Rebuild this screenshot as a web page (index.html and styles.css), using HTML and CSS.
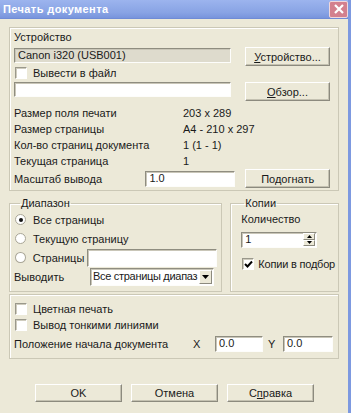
FILE: index.html
```html
<!DOCTYPE html>
<html>
  <head>
    <meta charset=utf-8>
    <title>Печать документа</title>
    <link rel="stylesheet" href="styles.css">
  </head>
  <body>
    <div class="window">
      <div class="titlebar">
        <span class="title">Печать документа</span>
        <span class="close">
          <svg width="12" height="12" viewBox="0 0 12 12"><path d="M2 2L10 10M10 2L2 10" stroke="#fff" stroke-width="2.2"/></svg>
        </span>
      </div>
      <div class="body">
        <div class="group device">
          <div class="dev-label">Устройство</div>
          <div class="row r-dev">
            <div class="field grey">Canon i320 (USB001)</div>
            <button class="btn"><u>У</u>стройство...</button>
          </div>
          <div class="check-row"><span class="check"></span>Вывести в файл</div>
          <div class="row r-file">
            <div class="field"></div>
            <button class="btn"><u>О</u>бзор...</button>
          </div>
          <div class="info">
            <span>Размер поля печати</span><span>203 x 289</span>
          </div>
          <div class="info">
            <span>Размер страницы</span><span>A4 - 210 x 297</span>
          </div>
          <div class="info">
            <span>Кол-во страниц документа</span><span>1 (1 - 1)</span>
          </div>
          <div class="info">
            <span>Текущая страница</span><span>1</span>
          </div>
          <div class="row r-scale">
            <span class="scale-label">Масштаб вывода</span>
            <div class="field scale">1.0</div>
            <button class="btn">Подогнать</button>
          </div>
        </div>

        <div class="middle">
          <fieldset class="range">
            <legend>Диапазон</legend>
            <div class="radio-row"><span class="radio on"></span>Все страницы</div>
            <div class="radio-row"><span class="radio"></span>Текущую страницу</div>
            <div class="radio-row">
              <span class="radio"></span><span class="pages-label">Страницы</span>
              <div class="field pages"></div>
            </div>
            <div class="out-row">
              <span class="out-label">Выводить</span>
              <div class="field select">
                <span class="select-text">Все страницы диапаз</span>
                <span class="drop">
                  <svg width="7" height="4" viewBox="0 0 7 4"><path d="M0 0H7L3.5 4Z" fill="#000"/></svg>
                </span>
              </div>
            </div>
          </fieldset>
          <fieldset class="copies">
            <legend>Копии</legend>
            <div class="count-label">Количество</div>
            <div class="field spin">
              <span>1</span>
              <span class="spin-btns">
                <span class="spin-btn"><svg width="5" height="3" viewBox="0 0 5 3"><path d="M0 3H5L2.5 0Z" fill="#000"/></svg></span>
                <span class="spin-btn"><svg width="5" height="3" viewBox="0 0 5 3"><path d="M0 0H5L2.5 3Z" fill="#000"/></svg></span>
              </span>
            </div>
            <div class="check-row collate">
              <span class="check">
                <svg width="9" height="9" viewBox="0 0 9 9"><path d="M1 4L3.5 6.5L8 1.5" stroke="#000" stroke-width="2" fill="none"/></svg>
              </span>Копии в подбор
            </div>
          </fieldset>
        </div>

        <div class="group options">
          <div class="check-row"><span class="check"></span>Цветная печать</div>
          <div class="check-row"><span class="check"></span>Вывод тонкими линиями</div>
          <div class="origin-row">
            <span class="origin-label">Положение начала документа</span>
            <span class="axis">X</span>
            <div class="field coord">0.0</div>
            <span class="axis y">Y</span>
            <div class="field coord last">0.0</div>
          </div>
        </div>

        <div class="buttons">
          <button class="btn">OK</button>
          <button class="btn">Отмена</button>
          <button class="btn">С<u>п</u>равка</button>
        </div>
      </div>
    </div>
  </body>
</html>
```

FILE: styles.css
```css
body {
  margin: 0;
  background: #fff;
  font-family: "Liberation Sans", Arial, sans-serif;
  font-size: 11px;
  color: #1a1a1a;
}

.window {
  width: 348px;
  height: 413px;
  background: #ece9d8;
  border-right: 3px solid #7d99e0;
  overflow: hidden;
}

.titlebar {
  height: 18px;
  display: flex;
  align-items: center;
  justify-content: space-between;
  background: linear-gradient(#9cb4ee, #88a3e4 70%, #7894dc);
  border-bottom: 1px solid #6f8bd6;
}
.title {
  color: #fff;
  font-weight: bold;
  font-size: 11px;
  letter-spacing: 0.4px;
  padding-left: 3px;
}
.close {
  width: 19px;
  height: 17px;
  background: #d3808e;
  border: 1px solid #f0d8dc;
  border-radius: 2px;
  box-sizing: border-box;
  display: flex;
  align-items: center;
  justify-content: center;
}

.body {
  padding: 0 9px;
}

.group {
  border: 1px solid #cbc8b6;
  box-shadow: inset 1px 1px #fff;
}

/* --- device group --- */
.device {
  margin-top: 8px;
  padding: 3px 8px 2px 4px;
}
.dev-label {
  height: 12px;
  line-height: 12px;
}
.row {
  display: flex;
  align-items: flex-start;
  justify-content: space-between;
}
.r-dev { margin-top: 4px; }
.r-dev .field { margin-top: 1px; }
.r-file { margin-top: 3px; }

.field {
  box-sizing: border-box;
  flex: none;
  height: 15px;
  line-height: 13px;
  background: #fff;
  border: 1px solid;
  border-color: #8f8d80 #fdfdfb #fdfdfb #8f8d80;
  box-shadow: inset 1px 1px #c9c6b8;
  padding-left: 3px;
  white-space: nowrap;
  overflow: hidden;
}
.device .field {
  width: 217px;
}
.field.grey {
  background: #dedbcd;
}

.btn {
  box-sizing: border-box;
  width: 85px;
  height: 19px;
  padding: 0;
  font: inherit;
  color: #1a1a1a;
  background: #ece9d8;
  border: 1px solid;
  border-color: #fff #8c8a7e #8c8a7e #fff;
  box-shadow: inset -1px -1px #c4c1b1;
}

.check-row {
  display: flex;
  align-items: center;
  height: 13px;
  white-space: nowrap;
}
.check {
  box-sizing: border-box;
  flex: none;
  width: 12px;
  height: 12px;
  margin: 0 6px 0 1px;
  background: #fff;
  border: 1px solid;
  border-color: #9a988b #fff #fff #9a988b;
  box-shadow: inset 1px 1px #cfccbe;
  display: flex;
  align-items: center;
  justify-content: center;
}

.info {
  display: flex;
  height: 16px;
  align-items: center;
}
.r-file + .info { margin-top: 4px; }
.info span:first-child {
  width: 169px;
}
.r-scale {
  align-items: center;
  height: 19px;
}
.scale-label {
  width: 132px;
}
.device .field.scale {
  width: 90px;
  height: 16px;
  margin-right: 10px;
}

/* --- range and copies --- */
.middle {
  display: flex;
  gap: 8px;
  margin-top: 6px;
}
fieldset {
  margin: 0;
  padding: 0 4px 3px 4px;
  border: 1px solid #cbc8b6;
  box-shadow: inset 1px 1px #fff;
  box-sizing: border-box;
  min-width: 0;
}
legend {
  padding: 0 1px;
  margin-left: 6px;
  line-height: 13px;
}
.range {
  width: 214px;
  height: 95px;
}
.copies {
  width: 109px;
  height: 95px;
  padding: 0 0 3px 10px;
}
.copies legend { margin-left: 3px; }

.radio-row {
  display: flex;
  align-items: center;
  height: 19px;
}
.radio {
  box-sizing: border-box;
  width: 11px;
  height: 11px;
  border-radius: 50%;
  background: #fff;
  border: 1px solid #a9a697;
  margin: 0 7px 0 1px;
  display: flex;
  align-items: center;
  justify-content: center;
}
.radio.on::after {
  content: "";
  width: 4px;
  height: 4px;
  border-radius: 50%;
  background: #111;
}
.pages-label {
  width: 57px;
}
.field.pages {
  width: 130px;
  height: 18px;
}
.out-row {
  display: flex;
  align-items: center;
  height: 19px;
}
.out-label {
  width: 76px;
}
.field.select {
  width: 124px;
  height: 18px;
  display: flex;
  align-items: center;
  padding: 0 1px 0 2px;
}
.select-text {
  flex: 1;
  letter-spacing: -0.3px;
  white-space: nowrap;
}
.drop {
  box-sizing: border-box;
  flex: none;
  width: 13px;
  height: 14px;
  background: #ece9d8;
  border: 1px solid;
  border-color: #fff #8c8a7e #8c8a7e #fff;
  display: flex;
  align-items: center;
  justify-content: center;
}

.count-label {
  height: 19px;
  line-height: 19px;
}
.field.spin {
  width: 76px;
  height: 16px;
  margin-top: 3px;
  display: flex;
  justify-content: space-between;
  padding-right: 1px;
}
.spin-btns {
  display: flex;
  flex-direction: column;
  width: 12px;
}
.spin-btn {
  box-sizing: border-box;
  height: 6.5px;
  background: #ece9d8;
  border: 1px solid;
  border-color: #fff #8c8a7e #8c8a7e #fff;
  display: flex;
  align-items: center;
  justify-content: center;
}
.collate {
  margin-top: 9px;
  height: 14px;
  letter-spacing: -0.2px;
}
.collate .check {
  margin-right: 4px;
}

/* --- options --- */
.options {
  margin-top: 2px;
  padding: 6px 4px 6px 4px;
}
.options .check-row {
  height: 16px;
}
.origin-row {
  display: flex;
  align-items: center;
  height: 16px;
  margin-top: 3px;
}
.origin-label {
  flex: none;
  width: 179px;
}
.axis {
  flex: none;
  width: 22px;
}
.axis.y {
  width: 15px;
}
.field.coord {
  width: 48px;
  height: 16px;
  margin-right: 5px;
}
.field.coord.last {
  width: 50px;
  margin-right: 0;
}

.buttons {
  display: flex;
  gap: 9px;
  margin-top: 25px;
  padding-left: 26px;
}
.buttons .btn {
  width: 87px;
  height: 18px;
}
```
